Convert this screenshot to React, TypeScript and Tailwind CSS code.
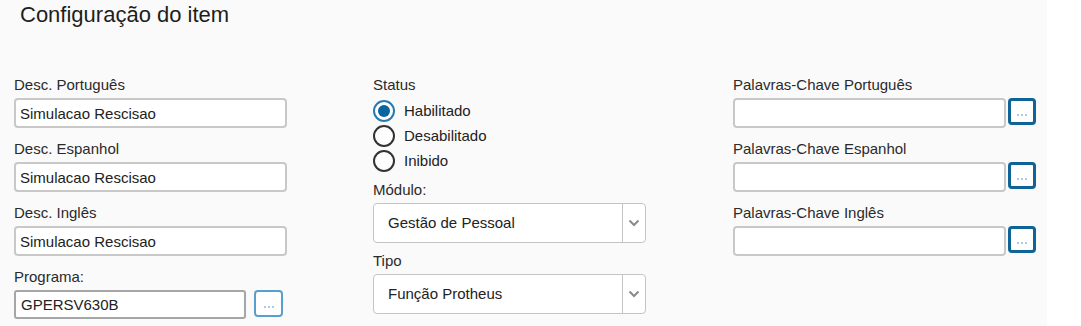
import React from 'react';

const font = "font-['Liberation_Sans',Arial,sans-serif]";

function Label({ children, className = '' }: { children: React.ReactNode; className?: string }) {
  return <div className={`text-[15px] leading-[17px] text-[#2a2a2a] ${className}`}>{children}</div>;
}

function TextField({ label, value = '', className = '' }: { label: string; value?: string; className?: string }) {
  return (
    <div className={className}>
      <Label>{label}</Label>
      <input
        readOnly
        value={value}
        className="mt-[5px] block h-[30px] w-[273px] rounded-[4px] border-2 border-[#c8c8c8] bg-white px-[4px] text-[15px] text-[#222] outline-none"
      />
    </div>
  );
}

function DotsButton({ dark }: { dark?: boolean }) {
  return (
    <button
      className={
        dark
          ? 'flex h-[27px] w-[28px] items-end justify-center rounded-[4px] border-[3px] border-[#0f6396] bg-white pb-[6px]'
          : 'flex h-[27px] w-[29px] items-end justify-center rounded-[4px] border-2 border-[#5a9fc9] bg-white pb-[7px]'
      }
    >
      <span className="flex gap-[2px]">
        <span className="h-[2px] w-[2px] bg-[#a9cbe5]" />
        <span className="h-[2px] w-[2px] bg-[#a9cbe5]" />
        <span className="h-[2px] w-[2px] bg-[#a9cbe5]" />
      </span>
    </button>
  );
}

function KeywordField({ label, className = '' }: { label: string; className?: string }) {
  return (
    <div className={className}>
      <Label>{label}</Label>
      <div className="mt-[5px] flex items-start gap-[2px]">
        <input
          readOnly
          className="block h-[30px] w-[273px] rounded-[4px] border-2 border-[#c8c8c8] bg-white px-[4px] text-[15px] outline-none"
        />
        <DotsButton dark />
      </div>
    </div>
  );
}

function Radio({ label, checked }: { label: string; checked?: boolean }) {
  return (
    <div className="flex h-[25px] items-center">
      {checked ? (
        <span className="flex h-[22px] w-[22px] items-center justify-center rounded-full border-2 border-[#2a7ab2] bg-white">
          <span className="h-[12px] w-[12px] rounded-full bg-[#0a64a0]" />
        </span>
      ) : (
        <span className="h-[22px] w-[22px] rounded-full border-2 border-[#333] bg-white" />
      )}
      <span className="ml-[9px] text-[15px] leading-[17px] text-[#222]">{label}</span>
    </div>
  );
}

function SelectField({ label, value, className = '' }: { label: string; value: string; className?: string }) {
  return (
    <div className={className}>
      <Label>{label}</Label>
      <div className="mt-[5px] flex h-[40px] w-[273px] rounded-[4px] border border-[#c4c4c4] bg-white">
        <div className="flex flex-1 items-center pl-[14px] text-[15px] text-[#222]">{value}</div>
        <div className="flex w-[23px] items-center justify-center border-l border-[#c4c4c4]">
          <svg width="12" height="8" viewBox="0 0 12 8">
            <path d="M1.5 1.5 L6 6 L10.5 1.5" fill="none" stroke="#8a8a8a" strokeWidth="2" />
          </svg>
        </div>
      </div>
    </div>
  );
}

export default function App() {
  return (
    <div className={`flex h-[326px] w-[1081px] bg-white ${font}`}>
      <div className="h-full w-[1047px] bg-[#fafafa]">
        <h1 className="pl-[20px] pt-[2px] text-[22px] leading-[26px] font-normal text-[#1e1e1e]">
          Configuração do item
        </h1>

        <div className="mt-[48px] grid grid-cols-[359px_360px_1fr] pl-[14px]">
          {/* coluna esquerda */}
          <div>
            <TextField label="Desc. Português" value="Simulacao Rescisao" />
            <TextField label="Desc. Espanhol" value="Simulacao Rescisao" className="mt-[12px]" />
            <TextField label="Desc. Inglês" value="Simulacao Rescisao" className="mt-[12px]" />
            <div className="mt-[12px]">
              <Label>Programa:</Label>
              <div className="mt-[5px] flex items-start gap-[8px]">
                <input
                  readOnly
                  value="GPERSV630B"
                  className="block h-[29px] w-[232px] rounded-[3px] border-2 border-[#a6a6a6] bg-white px-[5px] text-[15px] text-[#222] outline-none"
                />
                <DotsButton />
              </div>
            </div>
          </div>

          {/* coluna central */}
          <div>
            <Label>Status</Label>
            <div className="mt-[5px]">
              <Radio label="Habilitado" checked />
              <Radio label="Desabilitado" />
              <Radio label="Inibido" />
            </div>
            <SelectField label="Módulo:" value="Gestão de Pessoal" className="mt-[8px]" />
            <SelectField label="Tipo" value="Função Protheus" className="mt-[9px]" />
          </div>

          {/* coluna direita */}
          <div>
            <KeywordField label="Palavras-Chave Português" />
            <KeywordField label="Palavras-Chave Espanhol" className="mt-[12px]" />
            <KeywordField label="Palavras-Chave Inglês" className="mt-[12px]" />
          </div>
        </div>
      </div>
    </div>
  );
}
